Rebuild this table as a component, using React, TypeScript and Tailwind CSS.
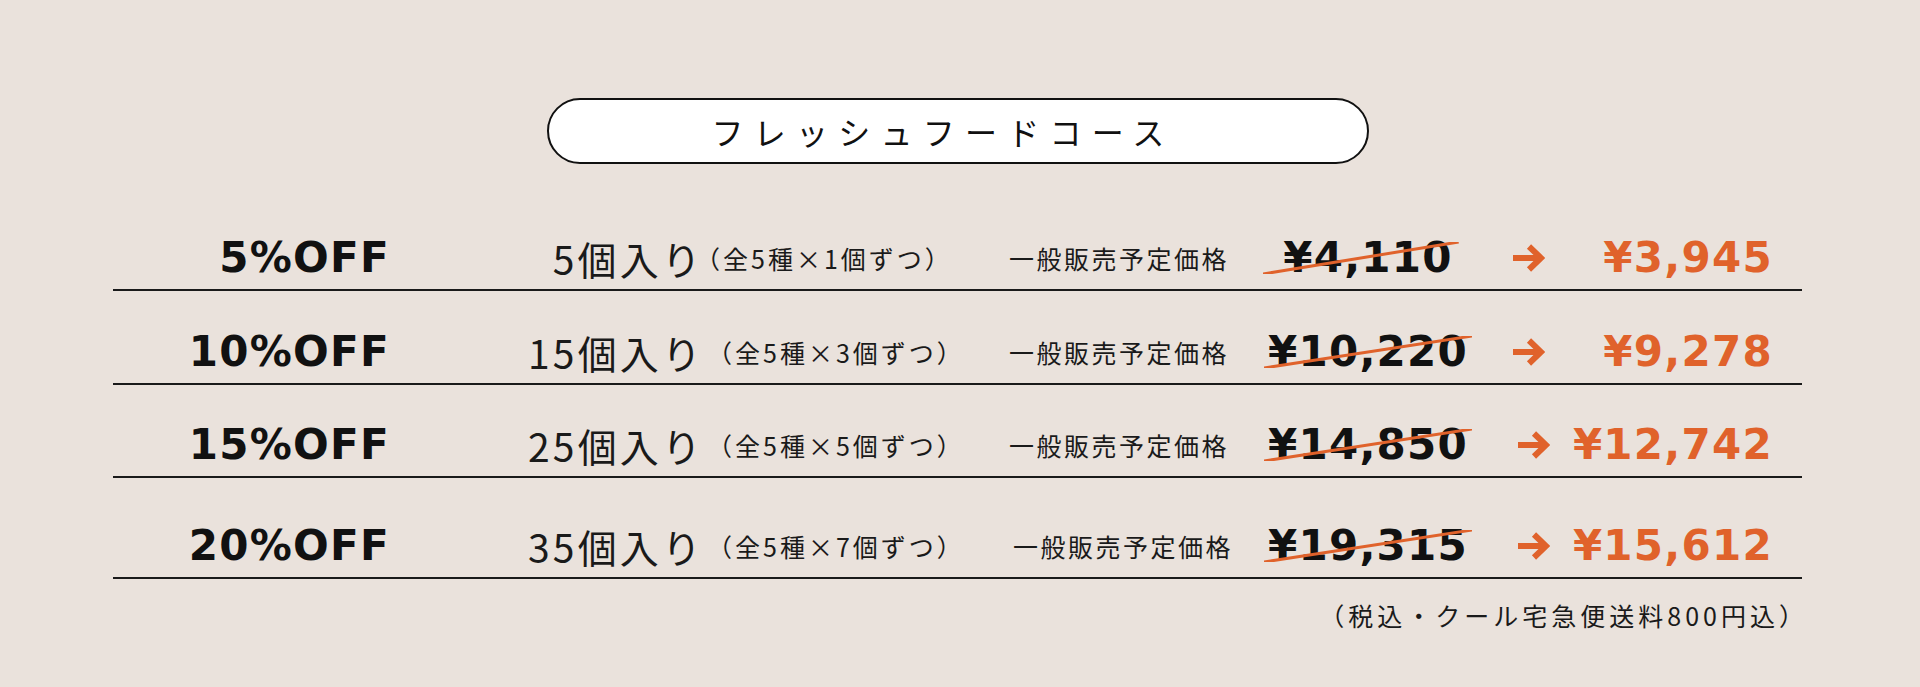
import React from "react";

// ── Data ──────────────────────────────────────────────────────────────────────

type Row = {
  off: string;
  count: string;
  per: string;
  old: string;
  now: string;
  h: string;
  parenMl: string;
  labelPl: string;
  arrowMl: string;
  strike: string;
};

const ROWS: Row[] = [
  { off: "5%OFF",  count: "5個入り",  per: "1", old: "¥4,110",  now: "¥3,945",  h: "h-[65px]",  parenMl: "ml-[-9px]", labelPl: "pl-0",     arrowMl: "ml-[27px]", strike: "left-[-20px] right-[-6px]" },
  { off: "10%OFF", count: "15個入り", per: "3", old: "¥10,220", now: "¥9,278",  h: "h-[94px]",  parenMl: "ml-[3px]",  labelPl: "pl-0",     arrowMl: "ml-[27px]", strike: "left-[-4px] right-[-4px]" },
  { off: "15%OFF", count: "25個入り", per: "5", old: "¥14,850", now: "¥12,742", h: "h-[93px]",  parenMl: "ml-[3px]",  labelPl: "pl-0",     arrowMl: "ml-[32px]", strike: "left-[-4px] right-[-4px]" },
  { off: "20%OFF", count: "35個入り", per: "7", old: "¥19,315", now: "¥15,612", h: "h-[101px]", parenMl: "ml-[3px]",  labelPl: "pl-[4px]", arrowMl: "ml-[32px]", strike: "left-[-4px] right-[-4px]" },
];

const JP = "font-['Noto_Sans_CJK_JP',sans-serif]";
const BOLD = "font-['DejaVu_Sans',sans-serif] font-bold tracking-[0.03em] text-[42px] leading-none";

// ── Pieces ────────────────────────────────────────────────────────────────────

function Arrow() {
  return (
    <svg width="33" height="30" viewBox="0 0 33 30" className="shrink-0 block">
      <path d="M1 15 H29 M17 3.5 L29 15 L17 26.5" fill="none" stroke="#e0622b" strokeWidth="6" />
    </svg>
  );
}

function PriceRow({ row }: { row: Row }) {
  return (
    <div className={`flex items-end pb-[6px] border-b-2 border-[#1a1a1a] ${row.h}`}>
      <div className="flex items-center h-[50px] w-full">
        {/* discount */}
        <div className={`w-[277px] shrink-0 text-right text-[#111] ${BOLD}`}>{row.off}</div>

        {/* count + breakdown */}
        <div className="w-[619px] shrink-0 flex items-center">
          <span className={`w-[314px] shrink-0 text-right text-[39px] leading-none font-normal tracking-[0.08em] text-[#1a1a1a] ${JP}`}>
            {row.count}
          </span>
          <span className={`${row.parenMl} text-[25px] leading-none tracking-[0.12em] text-[#1a1a1a] ${JP}`}>
            （全5種×{row.per}個ずつ）
          </span>
        </div>

        {/* label */}
        <div className={`w-[242px] shrink-0 ${row.labelPl} text-[25px] leading-none tracking-[0.1em] text-[#1a1a1a] ${JP}`}>
          一般販売予定価格
        </div>

        {/* old price */}
        <div className="w-[234px] shrink-0 flex justify-center">
          <span className={`relative inline-block text-[#111] ${BOLD}`}>
            {row.old}
            <div className={`absolute top-[5px] h-[32px] ${row.strike}`}>
              <svg className="block w-full h-full" viewBox="0 0 100 10" preserveAspectRatio="none">
                <line x1="0" y1="10" x2="100" y2="0" stroke="#e0622b" strokeWidth="3" vectorEffect="non-scaling-stroke" />
              </svg>
            </div>
          </span>
        </div>

        {/* arrow */}
        <div className={row.arrowMl}>
          <Arrow />
        </div>

        {/* new price */}
        <div className={`flex-1 text-right pr-[29px] text-[#e0622b] ${BOLD}`}>{row.now}</div>
      </div>
    </div>
  );
}

// ── Page ──────────────────────────────────────────────────────────────────────

export default function App() {
  return (
    <div className="w-[1920px] h-[687px] bg-[#eae2dc] overflow-hidden">
      <div className="pt-[98px] pl-[547px]">
        <div className="w-[822px] h-[66px] rounded-full border-2 border-[#111] bg-white flex items-center justify-center pr-[30px]">
          <span className={`text-[32px] leading-none tracking-[0.32em] text-[#111] ${JP}`}>フレッシュフードコース</span>
        </div>
      </div>

      <div className="ml-[113px] w-[1689px] mt-[62px]">
        {ROWS.map((r) => (
          <PriceRow key={r.off} row={r} />
        ))}
        <div className="flex justify-end mt-[18px] mr-[-6px]">
          <span className={`text-[25px] leading-[36px] tracking-[0.16em] text-[#1a1a1a] ${JP}`}>
            （税込・クール宅急便送料800円込）
          </span>
        </div>
      </div>
    </div>
  );
}
